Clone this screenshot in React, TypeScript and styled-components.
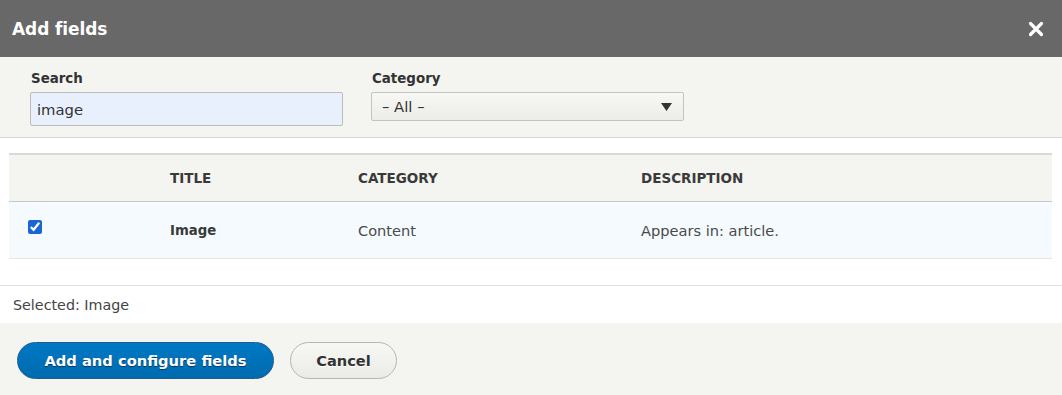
import React from "react";
import styled, { createGlobalStyle } from "styled-components";

const Global = createGlobalStyle`
  html, body { margin: 0; padding: 0; background: #ffffff; }
  body { font-family: "DejaVu Sans", Verdana, sans-serif; color: #333; }
  * { box-sizing: border-box; }
`;

const Dialog = styled.div`
  width: 1062px;
  height: 395px;
  display: flex;
  flex-direction: column;
  background: #fff;
  overflow: hidden;
`;

const TitleBar = styled.div`
  height: 57px;
  flex: none;
  background: #686868;
  display: flex;
  align-items: center;
  justify-content: space-between;
  padding: 0 18px 0 12px;
`;

const Title = styled.h1`
  margin: 0;
  color: #fff;
  font-size: 17px;
  font-weight: bold;
  letter-spacing: -0.1px;
`;

const CloseButton = styled.button`
  width: 16px;
  height: 16px;
  padding: 0;
  border: 0;
  background: none;
  display: flex;
  cursor: pointer;
`;

const Filters = styled.div`
  height: 81px;
  flex: none;
  background: #f4f4f0;
  border-bottom: 1px solid #d6d6d2;
  display: flex;
  gap: 28px;
  padding: 13px 0 0 30px;
`;

const Field = styled.div`
  display: flex;
  flex-direction: column;
  gap: 4px;
  width: 313px;
`;

const Label = styled.label`
  font-size: 13.4px;
  font-weight: bold;
  color: #333;
  padding-left: 1px;
  line-height: 18px;
`;

const TextInput = styled.input`
  height: 34px;
  width: 313px;
  border: 1px solid #bcbcb8;
  border-radius: 2px;
  background: #e8f0fe;
  font-family: inherit;
  font-size: 14.8px;
  color: #333;
  padding: 0 6px;
  outline: none;
`;

const Select = styled.div`
  height: 29px;
  width: 313px;
  border: 1px solid #c4c4bf;
  border-radius: 2px;
  background: linear-gradient(#f7f7f4, #ececE8);
  display: flex;
  align-items: center;
  justify-content: space-between;
  padding: 0 11px 0 10px;
  font-size: 14.8px;
  color: #333;
`;

const Body = styled.div`
  flex: 1;
  display: flex;
  flex-direction: column;
  padding-top: 15px;
`;

const Table = styled.div`
  margin: 0 10px 0 9px;
  border-top: 2px solid #d9d9d5;
`;

const Row = styled.div<{ $head?: boolean }>`
  display: grid;
  grid-template-columns: 149px 188px 283px 1fr;
  align-items: center;
  height: ${(p) => (p.$head ? "47px" : "57px")};
  background: ${(p) => (p.$head ? "#f4f4f0" : "#f5fafe")};
  border-bottom: 1px solid ${(p) => (p.$head ? "#c8c8c4" : "#e6e6e4")};
`;

const HeadCell = styled.div`
  padding-left: 12px;
  font-size: 13.5px;
  font-weight: bold;
  color: #3a3a3a;
  text-transform: uppercase;
`;

const Cell = styled.div<{ $bold?: boolean }>`
  padding-left: 12px;
  font-size: ${(p) => (p.$bold ? "13.3px" : "14.6px")};
  font-weight: ${(p) => (p.$bold ? "bold" : "normal")};
  color: ${(p) => (p.$bold ? "#3a3a3a" : "#4a4a4a")};
`;

const CheckCell = styled.div`
  padding-left: 19px;
  display: flex;
  align-items: center;
  height: 100%;
  padding-bottom: 7px;
`;

const Check = styled.input`
  margin: 0;
  width: 14px;
  height: 14px;
  accent-color: #1a66d2;
`;

const Spacer = styled.div`
  height: 27px;
  border-bottom: 1px solid #e2e2e0;
`;

const Selected = styled.div`
  height: 37px;
  display: flex;
  align-items: center;
  padding-left: 13px;
  font-size: 14.3px;
  color: #444;
`;

const Footer = styled.div`
  flex: 1;
  background: #f4f4f0;
  display: flex;
  align-items: flex-start;
  gap: 16px;
  padding: 19px 0 0 17px;
`;

const Button = styled.button<{ $primary?: boolean }>`
  height: 37px;
  border-radius: 20px;
  font-family: inherit;
  font-weight: bold;
  cursor: pointer;
  padding: 0;
  ${(p) =>
    p.$primary
      ? `
    width: 257px;
    font-size: 14.7px;
    color: #fff;
    background: linear-gradient(#0078c4, #006bb0);
    border: 1px solid #1e5c90;
    text-shadow: 0 1px 1px rgba(0,0,0,0.5);
  `
      : `
    width: 107px;
    font-size: 14.6px;
    color: #333;
    background: linear-gradient(#f7f7f4, #ebebe6);
    border: 1px solid #b5b5b1;
    text-shadow: 0 1px 0 #fff;
  `}
`;

export default function App() {
  return (
    <>
      <Global />
      <Dialog>
        <TitleBar>
          <Title>Add fields</Title>
          <CloseButton aria-label="Close">
            <svg width="16" height="16" viewBox="0 0 16 16">
              <path d="M2.5 2.5 L13.5 13.5 M13.5 2.5 L2.5 13.5" stroke="#fff" strokeWidth="3.2" strokeLinecap="round" />
            </svg>
          </CloseButton>
        </TitleBar>
        <Filters>
          <Field>
            <Label>Search</Label>
            <TextInput defaultValue="image" />
          </Field>
          <Field>
            <Label>Category</Label>
            <Select>
              <span>– All –</span>
              <svg width="11" height="8" viewBox="0 0 11 8">
                <path d="M0 0 H11 L5.5 8 Z" fill="#333" />
              </svg>
            </Select>
          </Field>
        </Filters>
        <Body>
          <Table>
            <Row $head>
              <HeadCell />
              <HeadCell>Title</HeadCell>
              <HeadCell>Category</HeadCell>
              <HeadCell>Description</HeadCell>
            </Row>
            <Row>
              <CheckCell>
                <Check type="checkbox" defaultChecked />
              </CheckCell>
              <Cell $bold>Image</Cell>
              <Cell>Content</Cell>
              <Cell>Appears in: article.</Cell>
            </Row>
          </Table>
          <Spacer />
          <Selected>Selected: Image</Selected>
          <Footer>
            <Button $primary>Add and configure fields</Button>
            <Button>Cancel</Button>
          </Footer>
        </Body>
      </Dialog>
    </>
  );
}
